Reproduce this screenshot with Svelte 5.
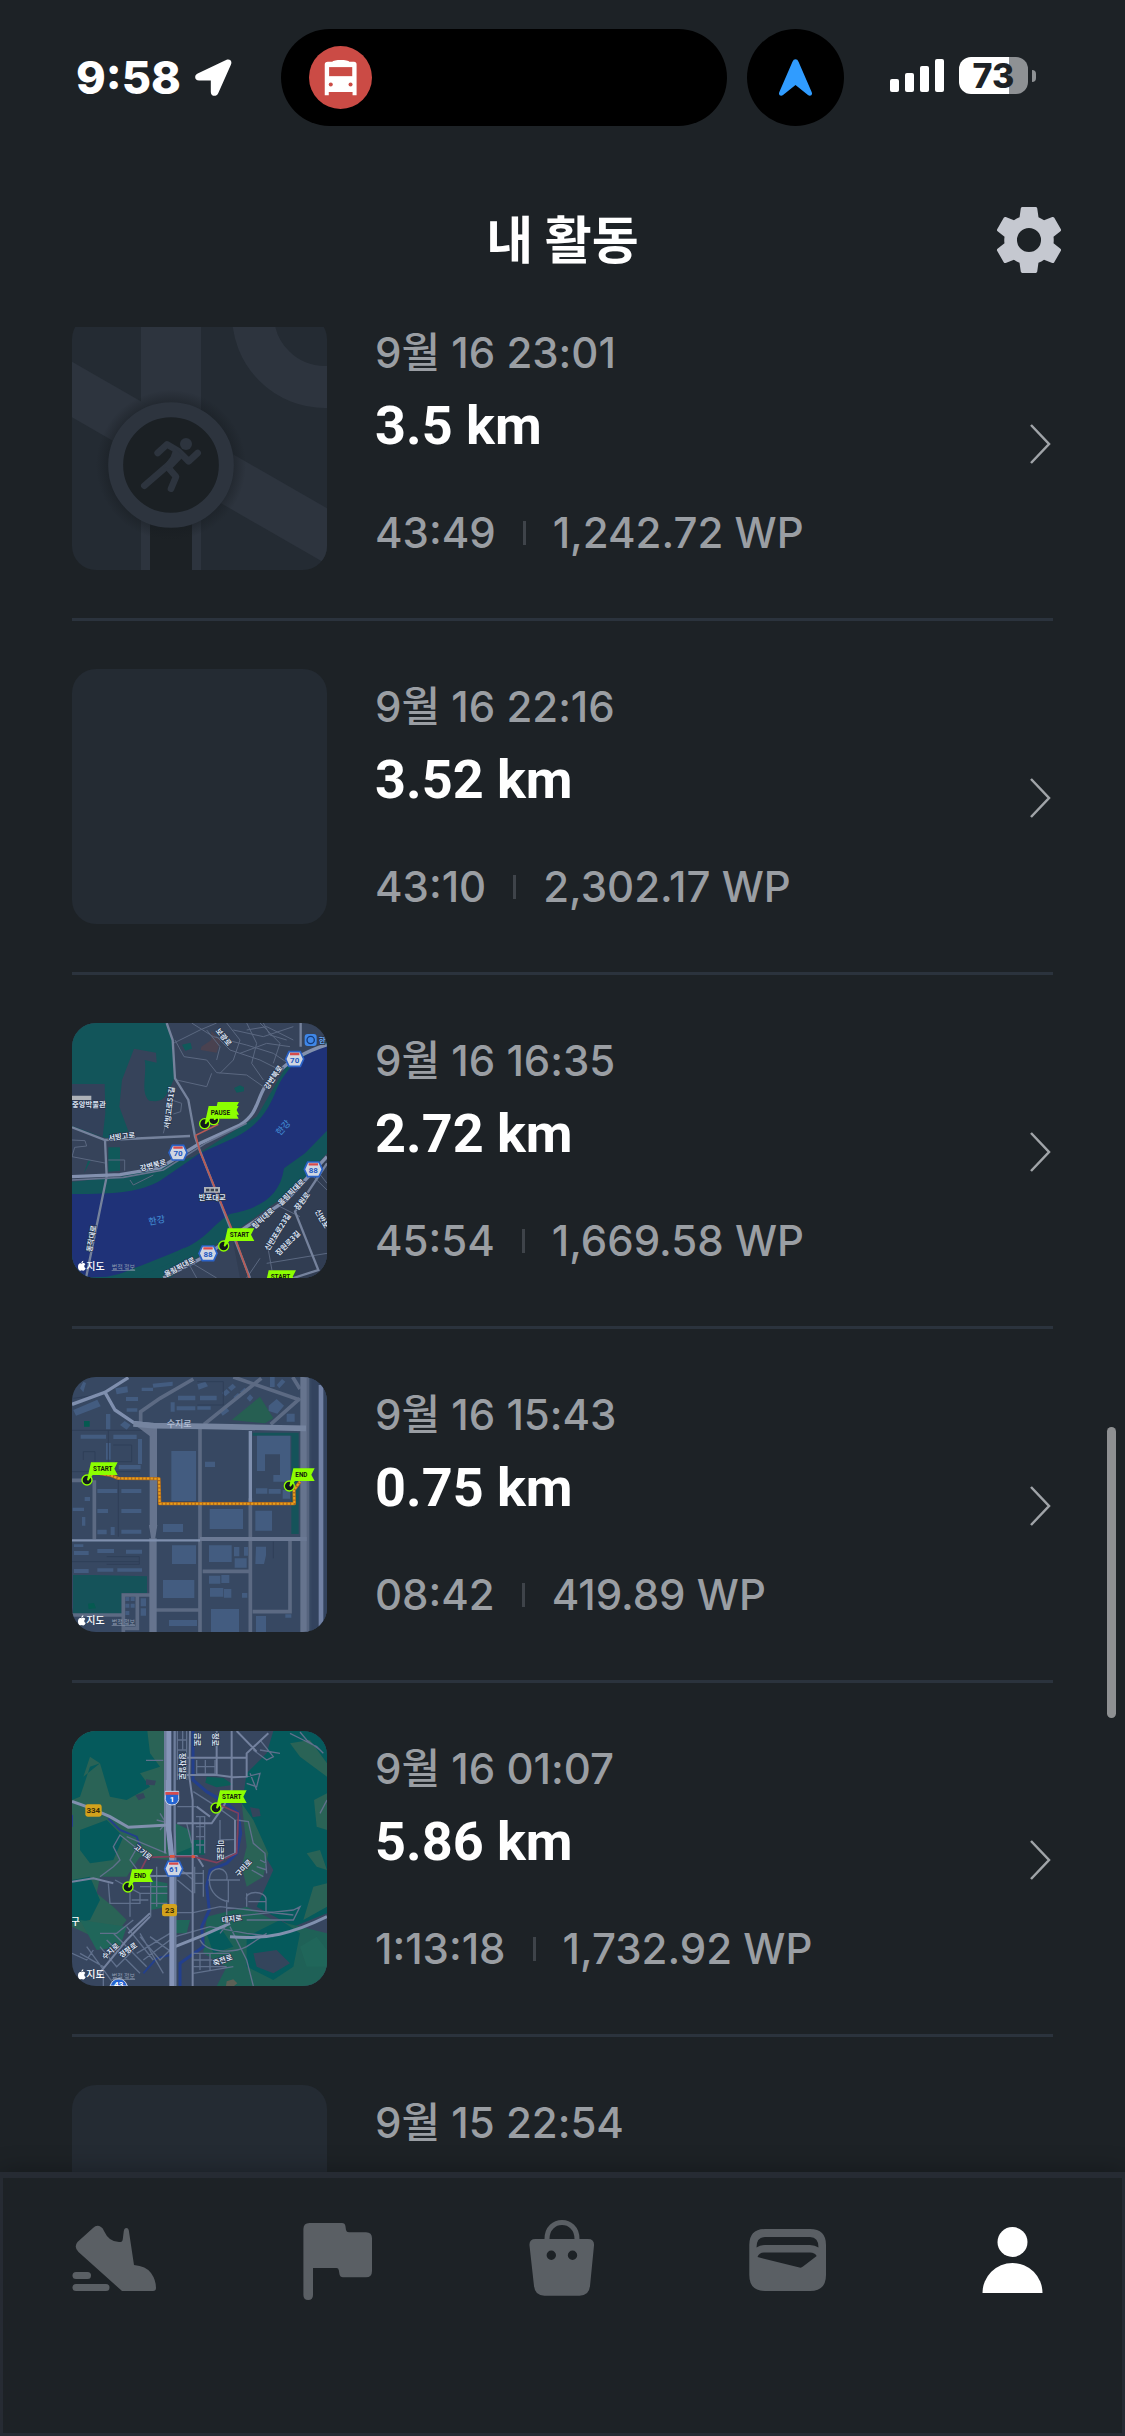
<script>
  import { onMount } from 'svelte';

  const activities = [
    { map: 'placeholder', date: '9월 16 23:01', distance: '3.5 km', time: '43:49', points: '1,242.72 WP' },
    { map: 'empty', date: '9월 16 22:16', distance: '3.52 km', time: '43:10', points: '2,302.17 WP' },
    { map: 'river', date: '9월 16 16:35', distance: '2.72 km', time: '45:54', points: '1,669.58 WP' },
    { map: 'blocks', date: '9월 16 15:43', distance: '0.75 km', time: '08:42', points: '419.89 WP' },
    { map: 'hills', date: '9월 16 01:07', distance: '5.86 km', time: '1:13:18', points: '1,732.92 WP' },
    { map: 'empty', date: '9월 15 22:54', distance: '', time: '', points: '' }
  ];

  const battery = 73;
  let list;

  // The list opens slightly scrolled, with the first thumbnail under the header.
  onMount(() => {
    list.scrollTop = 60;
  });
</script>

{#snippet flag(x, y, label, width)}
  <g transform="translate({x} {y})">
    <circle r="15" fill="#12181c" stroke="#8cff00" stroke-width="4" />
    <path d="M0 0L12 -53H{width}l-10 19 10 19H17L4 2z" fill="#8cff00" />
    <text x="18" y="-27" class="flag-text">{label}</text>
  </g>
{/snippet}

{#snippet shield(x, y, label)}
  <g transform="translate({x} {y})">
    <path d="M-27 0L-17 -22H17L27 0L17 22H-17z" fill="#d0d6e2" stroke="#2a62c8" stroke-width="5" />
    <path d="M-14 -15H14" stroke="#d84b4b" stroke-width="7" />
    <text y="11" class="shield-text">{label}</text>
  </g>
{/snippet}

{#snippet credit(y)}
  <g transform="translate(54 {y})">
    <path d="M10 6c4-3 10-2 12 2-5 3-4 10 1 12-2 7-7 9-12 6-5 3-11-1-11-10C0 7 5 3 10 6zM10 4c0-4 3-7 6-7 0 4-2 7-6 7z" fill="#fff" />
    <text x="25" y="24" class="credit">지도</text>
    <text x="101" y="23" class="legal">법적 정보</text>
  </g>
{/snippet}

<div class="screen">
  <div class="status">
    <div class="status-left">
      <span class="clock">9:58</span>
      <svg class="locate" viewBox="401 116 110 110" aria-hidden="true">
        <path d="M495 118c10-3 17 4 13 14l-38 86c-6 12-22 9-22-4v-34h-35c-14 0-15-16-4-21z" fill="#fff" />
      </svg>
    </div>
    <div class="islands">
      <div class="island wide">
        <svg class="bus" viewBox="746 78 188 188" aria-hidden="true">
          <circle cx="840" cy="172" r="94" fill="#cb4b45" />
          <path d="M802 125h14c2-7 48-7 50 0h14q8 0 8 8v92h-12v-10h-71v10h-12v-92q0-8 9-8z" fill="#fff" />
          <rect x="806" y="141" width="69" height="27" fill="#cb4b45" />
          <circle cx="811" cy="193" r="6" fill="#cb4b45" />
          <circle cx="870" cy="193" r="6" fill="#cb4b45" />
        </svg>
      </div>
      <div class="island round">
        <svg class="arrow" viewBox="146 112 98 110" aria-hidden="true">
          <path d="M195 113q6 0 9 7l39 90c4 9-4 14-11 9l-37-30-37 30c-7 5-15 0-11-9l39-90q3-7 9-7z" fill="#309cff" />
        </svg>
      </div>
    </div>
    <div class="status-right">
      <svg class="signal" viewBox="0 0 54 33" aria-hidden="true">
        <rect x="0" y="20" width="9" height="13" rx="2" />
        <rect x="15" y="14" width="9" height="19" rx="2" />
        <rect x="30" y="7" width="9" height="26" rx="2" />
        <rect x="45" y="0" width="9" height="33" rx="2" />
      </svg>
      <div class="battery">
        <div class="cell" style="--level: {battery}%">{battery}</div>
        <div class="nub"></div>
      </div>
    </div>
  </div>

  <header>
    <h1>내 활동</h1>
    <button class="settings" aria-label="설정">
      <svg viewBox="2.4 2.4 19.2 19.2" aria-hidden="true">
        <path fill="#c5c8d0" d="M19.14 12.94c.04-.3.06-.61.06-.94 0-.32-.02-.64-.07-.94l2.03-1.58c.18-.14.23-.41.12-.61l-1.92-3.32c-.12-.22-.37-.29-.59-.22l-2.39.96c-.5-.38-1.03-.7-1.62-.94l-.36-2.54c-.04-.24-.24-.41-.48-.41h-3.84c-.24 0-.43.17-.47.41l-.36 2.54c-.59.24-1.13.57-1.62.94l-2.39-.96c-.22-.08-.47 0-.59.22L2.74 8.87c-.12.21-.08.47.12.61l2.03 1.58c-.05.3-.09.63-.09.94s.02.64.07.94l-2.03 1.58c-.18.14-.23.41-.12.61l1.92 3.32c.12.22.37.29.59.22l2.39-.96c.5.38 1.03.7 1.62.94l.36 2.54c.05.24.24.41.48.41h3.84c.24 0 .44-.17.47-.41l.36-2.54c.59-.24 1.13-.56 1.62-.94l2.39.96c.22.08.47 0 .59-.22l1.92-3.32c.12-.22.07-.47-.12-.61l-2.01-1.58zM12 15.5a3.5 3.5 0 1 1 0-7 3.5 3.5 0 0 1 0 7z" />
      </svg>
    </button>
  </header>

  <main>
    <ul bind:this={list}>
      {#each activities as item}
        <li>
          <a href="#activity">
            <div class="thumb">
              {#if item.map === 'placeholder'}
                <svg viewBox="66 15 765 765" aria-hidden="true">
                  <defs>
                    <radialGradient id="halo">
                      <stop offset="0.82" stop-color="#171c21" stop-opacity="0.5" />
                      <stop offset="1" stop-color="#171c21" stop-opacity="0" />
                    </radialGradient>
                  </defs>
                  <g fill="#2d343e">
                    <path d="M273 15H453V780H273z" />
                    <path d="M66 155L831 595V763L66 322z" />
                  </g>
                  <circle cx="825" cy="15" r="216" fill="none" stroke="#2d343e" stroke-width="126" />
                  <path d="M300 620H426V780H300z" fill="#1c2125" />
                  <circle cx="363" cy="465" r="225" fill="url(#halo)" />
                  <circle cx="363" cy="465" r="166" fill="#1b2024" stroke="#2d343e" stroke-width="45" />
                  <circle cx="408" cy="402" r="18" fill="#2d343e" />
                  <g fill="none" stroke="#2d343e" stroke-width="20" stroke-linecap="round" stroke-linejoin="round">
                    <path d="M323 429L351 403L385 423L416 454L443 429" />
                    <path d="M283 527L355 465L383 435" />
                    <path d="M352 470L378 500L363 536" />
                  </g>
                  <path d="M372 412L400 440L364 478L340 470L362 440z" fill="#2d343e" />
                </svg>
              {:else if item.map === 'river'}
                <svg viewBox="36 39 765 765" aria-hidden="true">
                  <path d="M36 39H801V804H36z" fill="#36435a" />
                  <path d="M36 39H318L338 88L342 205C315 280 300 275 268 272C240 250 262 190 254 150L290 158L288 128L222 116L186 210L178 290L206 366L140 385L36 350z" fill="#12555a" />
                  <path d="M36 222H134L136 310L128 380L36 348z" fill="#33415a" />
                  <path d="M145 412L180 412V482L145 485zM72 490L92 452H84zM366 104l26-6 4 18-20 6zM522 234l18-8 12 6v12l-22 4z" fill="#10595a" />
                  <path d="M424 110l30-20 0-28 28 30-12 36-48-8z" fill="#4a4250" />
                  <path d="M36 515L180 500L270 480L400 440L590 320L690 150L801 95V430L700 540L560 640L430 730L330 804H36z" fill="#12555a" />
                  <path d="M36 552C180 552 240 545 300 512L420 430L520 385C590 350 620 310 645 250C680 160 740 130 801 104V362L735 430L672 475C660 560 600 595 510 612C460 640 440 690 360 720C280 760 200 790 140 800L36 804z" fill="#1f3278" />
                  <path d="M150 804C230 770 320 740 376 712L330 760L230 804zM670 660l20-14 4 26-30 10z" fill="#12555a" />
                  <path d="M540 804L520 700L700 560L801 450V804z" fill="#313d52" />
                  <g fill="none" stroke="#5b6880" stroke-width="3">
                    <path d="M340 100L420 60L470 39M345 90L372 140L440 150L470 188L560 195L610 230M395 39L460 80L560 105L640 130L700 170M500 39L540 90L520 150L480 190M560 39L590 100L575 160L610 210M600 39L660 100L640 160M520 60L610 80L700 50M470 80L510 120L600 150L650 175M540 130L620 100L690 110M350 210L440 230L455 190M310 370L335 270L365 280L362 305L340 312M36 390L75 392L80 408L44 412L36 440L140 460M145 450H194V482M210 510L220 525L280 495M610 39L630 75L680 90M440 60L480 110L470 150M560 60L620 50L700 90" />
                    <path d="M801 540L760 500M770 480L801 520M640 804L625 720M560 804L600 745M620 760L801 730M660 590L720 620M410 804L380 750L470 804" />
                  </g>
                  <g fill="none" stroke="#75829c" stroke-width="7">
                    <path d="M320 39L338 90L345 205L385 270L405 380L415 410L570 804" />
                    <path d="M36 352L135 390L390 378M135 390L140 500L78 804M722 39V110M801 460L705 605L775 780L700 804" />
                  </g>
                  <g fill="none" stroke="#8290ae" stroke-width="10">
                    <path d="M36 500L180 494L300 474L420 400L540 345C610 300 580 250 650 190C690 150 750 120 801 104" />
                    <path d="M310 804L430 742L560 650L680 570L801 440" />
                  </g>
                  <path d="M36 510L190 502L310 480L440 398L560 340" fill="none" stroke="#66738e" stroke-width="5" />
                  <path d="M475 343L407 376L420 425L520 668L568 804" fill="none" stroke="#b95a54" stroke-width="5" />
                  <g class="label">
                    <text x="146" y="392" transform="rotate(-7 146 392)">서빙고로</text>
                    <text x="242" y="484" transform="rotate(-15 242 484)">강변북로</text>
                    <text x="328" y="357" transform="rotate(-83 328 357)">서빙고로51길</text>
                    <text x="624" y="240" transform="rotate(-56 624 240)">강변북로</text>
                    <text x="466" y="62" transform="rotate(52 466 62)">보광로</text>
                    <text x="36" y="292">중앙박물관</text>
                    <text x="416" y="571">반포대교</text>
                    <text x="95" y="727" transform="rotate(-80 95 727)">동작대로</text>
                    <text x="584" y="658" transform="rotate(-42 584 658)">림픽대로</text>
                    <text x="664" y="588" transform="rotate(-45 664 588)">올림픽대로</text>
                    <text x="714" y="602" transform="rotate(-52 714 602)">잠원로</text>
                    <text x="764" y="604" transform="rotate(60 764 604)">신반포</text>
                    <text x="626" y="724" transform="rotate(-58 626 724)">신반포로23길</text>
                    <text x="656" y="738" transform="rotate(-45 656 738)">잠원로3길</text>
                    <text x="318" y="802" transform="rotate(-28 318 802)">올림픽대로</text>
                    <text x="776" y="100" class="station">한</text>
                  </g>
                  <text x="268" y="646" class="water" transform="rotate(-12 268 646)">한강</text>
                  <text x="660" y="378" class="water" transform="rotate(-48 660 378)">한강</text>
                  <path d="M36 257h58v13H36zM432 531h48v17h-48z" fill="#aeb2b8" />
                  <path d="M438 536h10v8h-10zM452 536h10v8h-10zM466 536h8v8h-8z" fill="#3a4250" />
                  <rect x="734" y="72" width="36" height="36" rx="9" fill="#3f87e8" />
                  <circle cx="752" cy="90" r="11" fill="none" stroke="#143a78" stroke-width="4" />
                  {@render shield(704, 147, '70')}
                  {@render shield(354, 428, '70')}
                  {@render shield(760, 478, '88')}
                  {@render shield(444, 730, '88')}
                  {@render flag(461, 329, '', 76)}
                  {@render flag(434, 341, 'PAUSE', 102)}
                  {@render flag(491, 708, 'START', 92)}
                  {@render flag(614, 834, 'START', 94)}
                  {@render credit(755)}
                </svg>
              {:else if item.map === 'blocks'}
                <svg viewBox="36 36 765 765" aria-hidden="true">
                  <path d="M36 36H801V801H36z" fill="#374862" />
                  <path d="M755 36H801V801H755z" fill="#33435e" />
                  <path d="M515 165L600 95L640 160L615 175z" fill="#265f52" />
                  <path d="M578 203H716V507H694V212H578zM39 630L100 630L261 634V684H185V747H39z" fill="#15535a" />
                  <path d="M72 168h17v17H72zM84 716l18-2 6 16-22 2z" fill="#055a50" />
                  <g fill="#435c80">
                    <path d="M40 135L112 104L122 124L48 152zM166 70l36-6 2 18-34 6zM245 68h34v10h-34zM278 56l60-6v12l-58 6zM198 96h36v12h-36zM354 92h52v14h-52zM350 124h56v12h-56zM332 112h12v28h-12zM412 58l24-8 8 14-28 10zM420 92h50v14h-50zM412 124h40v10h-40zM630 36h14v30h-14zM650 60l16-18 10 8-18 20zM626 122l24-20 22 20-20 24-26-8zM680 146h24v24h-24zM200 130h32v10h-32z" />
                    <path d="M62 209h76v12H62zM160 209h70v13h-70zM138 147h13v46h-13zM138 234h14v50h-14zM234 222h12v75h-12zM180 180l14-12 18 12-12 14zM60 70l10-20 8 4-8 28zM176 300h66v13h-66zM435 290h30v16h-30z" />
                    <path d="M334 258H408V408H334zM591 212H691V350H640V330H660V268H615V318H591zM588 370h34v16h-34zM626 372h36v14h-36zM668 375h22v26h-22zM449 432h100v60H449zM586 437h50v60h-50zM309 477h60v24h-60z" />
                    <path d="M112 372h60v12h-60zM184 372h60v12h-60zM112 432h32v12h-32zM184 432h60v12h-60zM112 494h28v14h-28zM184 494h60v12h-60zM152 486h12v24h-12zM38 428h34v10H38zM74 396h16v12H74zM66 456h10v26H66zM42 538h28v8H42zM42 558h44v12H42zM112 552h50v12h-50zM198 554h48v12h-48zM112 610h48v10h-48zM172 610h74v10h-74zM42 612h44v12H42z" />
                    <path d="M336 541h72v56h-72zM447 541h68v50h-68zM522 546h16v28h-16zM552 546h12v26h-12zM524 580h36v28h-36zM588 545h30v26l-6 26h-26zM309 645h94v54h-94zM447 632h34v24h-34zM484 630h24v24h-24zM450 669h40v26h-40zM492 672h22v26h-22zM546 684h16v14h-16zM327 765h84v18h-84zM453 732h84v69h-84zM588 753h30v48h-30zM196 696h12v12h-12zM212 696h12v12h-12zM196 716h12v12h-12zM212 716h12v12h-12zM242 700h16v24h-16zM242 730h16v22h-16zM196 738h12v12h-12zM676 748h18v10h-18z" />
                    <path d="M486 84l14-12 10 10-14 12zM504 68l14-12 10 10-14 12zM520 96l14-12 10 10-14 12zM540 80l14-12 10 10-14 12zM480 140l20-12 8 10-20 14zM560 100l10-12 10 10-10 12z" />
                  </g>
                  <g fill="none" stroke="#2f3f58" stroke-width="3">
                    <path d="M36 196H260M145 196V310M160 240H215V290H165M70 285V260H105V290M175 345V515M36 590H240M140 575H238V598H140M412 50H490V120H412M40 100L110 90M640 530V580M36 320H240" />
                  </g>
                  <g fill="none" stroke="#5c6a83" stroke-width="11">
                    <path d="M36 346H98M103 346V522M420 185V801M571 400V801M428 619H571M286 735H420M578 740H690V528M190 801V690H275M232 690V790H190M520 36L720 105M400 42L300 100L242 140V178M604 40L432 178M720 100L632 178M698 36L720 72M36 750H185" />
                  </g>
                  <path d="M280 180V490M279 520V801M732 36V801" fill="none" stroke="#66748e" stroke-width="22" />
                  <path d="M744 36V801" fill="none" stroke="#56647e" stroke-width="8" />
                  <path d="M267 480H292L285 525H274zM205 165L272 215L280 190z" fill="#66748e" />
                  <g fill="none" stroke="#7f8fae" stroke-width="10">
                    <path d="M36 118L135 82L205 38M135 82L165 135L220 172L280 180M571 198V410" />
                    <path d="M36 526H420" stroke-width="7" />
                    <path d="M420 522H740" stroke="#6b7994" stroke-width="12" />
                    <path d="M220 177L280 182L440 184L738 190" stroke-width="17" stroke="#75849f" />
                    <path d="M783 60V801" stroke-width="14" stroke="#7181a4" />
                  </g>
                  <text x="320" y="187" class="road">수지로</text>
                  <g fill="none" stroke-linejoin="round">
                    <path d="M120 326L150 330L175 340L297 341L299 416L703 416L702 375L720 350" stroke="#b06a1c" stroke-width="10" />
                    <path d="M120 326L150 330L175 340L297 341L299 416L703 416L702 375L720 350" stroke="#e9a01c" stroke-width="6" stroke-dasharray="7 4" />
                  </g>
                  {@render flag(81, 345, 'START', 92)}
                  {@render flag(688, 363, 'END', 76)}
                  {@render credit(754)}
                </svg>
              {:else if item.map === 'hills'}
                <svg viewBox="36 33 765 765" aria-hidden="true">
                  <path d="M36 33H801V798H36z" fill="#37465f" />
                  <path d="M36 33H312V300L330 420L240 410L200 470L120 470L110 520L160 560L200 600L170 640L100 650L36 620z" fill="#2a6356" />
                  <path d="M36 33H262L270 100L300 140L240 160L270 200L200 240L150 230L120 130L90 140L60 230L36 240zM60 330L140 300L190 350L160 420L90 430L60 390zM120 130L90 110L70 170zM36 480L90 470L120 540L90 600L36 610z" fill="#055a5c" />
                  <path d="M640 33H801V580L700 620L590 560L640 450L600 380L560 300L545 260L560 160L620 100z" fill="#055a5c" />
                  <path d="M545 250L580 300L625 400L610 470L560 500L545 440L560 380zM762 240L801 220V330L770 320zM740 400L780 390L801 450L770 440zM690 70L750 60L801 130V170L720 110zM760 500L801 490V560L730 600z" fill="#2a6356" />
                  <path d="M440 590L560 560L640 600L801 640V798H470L500 740L430 700z" fill="#1f6157" />
                  <path d="M560 650L660 600L720 640L700 740L640 780L560 740zM440 640L480 620L520 680L460 700z" fill="#055a5c" />
                  <path d="M720 680L770 650L801 690V740L740 740zM345 310L390 330L400 400L345 400zM345 600L390 600L380 640L345 640zM272 480L322 490V560L272 570zM60 600L200 620L180 680L110 690z" fill="#20665a" />
                  <path d="M400 360h34v44h-34zM350 400L398 380V412H350zM440 170l50 4 30 20-50 8-34-14z" fill="#0b5d58" />
                  <path d="M580 700L650 690L690 730L640 760L590 740zM258 178l30 4-4 14-26-2zM226 225l24-6 6 14-20 8zM570 262l28 4 4 22-24 4z" fill="#34455c" />
                  <path d="M500 784l20-6 12 12-10 8h-24z" fill="#5b6055" />
                  <g fill="none" stroke="#233f8c" stroke-width="9">
                    <path d="M399 33V180L440 215L500 250L535 280L542 340L530 400L500 430L450 450L440 500L448 570L425 620L430 680L360 730V798" />
                    <path d="M145 295L180 330L230 350L245 390L260 400M36 285V320M250 760L290 715L330 705" stroke-width="6" />
                  </g>
                  <g fill="none" stroke="#60708c" stroke-width="4">
                    <path d="M352 33V180M368 33V90M380 33V180M352 90H380M352 60H380M410 120V162H465V120M436 120V162M410 140H465M352 260H410M352 310H380L395 370M408 290H434V400M408 320H434M408 350H434M420 290V400M408 375H434M480 300V360L525 358V300L470 260L400 215M530 300L565 305L580 370L615 400L620 460M500 480C510 440 450 430 448 480C448 520 480 540 505 545V480M445 480H540M500 600V540M352 440L400 480M352 480L400 520M345 578H400L480 560L700 585M560 540C550 510 620 510 618 540V580M565 545H618M560 560V520M600 420L620 430M590 440L620 450M575 450L610 470M272 470V590M290 440V560M240 500H322M240 520H322M272 550H322M210 500V590M165 480L240 520V550H150L145 490M120 470L160 440L180 420L160 380L180 345L230 385L210 420L240 460M200 350L320 400M215 540H265M120 640L170 640L220 600M36 700L80 720L100 690M120 680L170 740L220 690M140 660L240 760M160 640L260 740M200 620L280 720M240 650L300 720L330 690M230 700L330 640M250 720L330 660M240 640L310 760M270 650L340 700M345 650L450 620L560 640L640 650M400 700H510M400 720H480M400 740H500M420 700V750M450 700V750M400 760L520 740M420 660C440 700 520 700 560 680L620 640M510 620L560 720L580 798M480 640L520 590L700 570L720 560L700 600L560 600M60 700L130 740V798M80 680L160 790M258 121H310M300 280L325 320M290 300L330 310M300 330L325 300M404 440V520M430 450V530M404 460H430M404 490H430M690 40L730 60L770 80L790 100M720 36L740 60L780 90M780 280L801 240M560 170L600 160L590 200L560 190M570 160L590 210M600 60L640 110L620 120L580 90M600 90L660 100" />
                  </g>
                  <g fill="none" stroke="#73819e" stroke-width="6">
                    <path d="M390 33L388 170L398 240V798M352 113H562M352 165H470L520 172L560 170V100L625 40M515 33V210L490 260L455 310H352M315 33V400M410 260L450 290M530 33L590 95M470 33V165M36 485L100 475L160 490M345 408H410L430 440M345 460H398M205 640L270 580M250 468H340M110 770L200 660L270 590M525 300V400L480 420" />
                  </g>
                  <path d="M36 244L80 260L150 290L205 322L325 315M345 680L420 650L510 610M510 650C620 660 700 640 801 590" fill="none" stroke="#8190ae" stroke-width="9" />
                  <path d="M326 33V330L336 420V798" fill="none" stroke="#8695b8" stroke-width="16" />
                  <path d="M344 33V330L346 420V798M316 33V180" fill="none" stroke="#6d7d9c" stroke-width="7" />
                  <path d="M235 465L262 412L330 410L400 410L470 428L530 400L535 280L480 255" fill="none" stroke="#80405c" stroke-width="5" />
                  <path d="M330 409h14M395 410h10" stroke="#e0523c" stroke-width="8" />
                  <g class="label">
                    <text x="359" y="98" transform="rotate(90 359 98)">정자일로</text>
                    <text x="404" y="38" transform="rotate(90 404 38)">금로</text>
                    <text x="460" y="38" transform="rotate(90 460 38)">정로</text>
                    <text x="475" y="360" transform="rotate(90 475 360)">미금로</text>
                    <text x="220" y="384" transform="rotate(38 220 384)">고기로</text>
                    <text x="536" y="472" transform="rotate(-48 536 472)">구미로</text>
                    <text x="134" y="720" transform="rotate(-42 134 720)">수지로</text>
                    <text x="184" y="714" transform="rotate(-35 184 714)">정평로</text>
                    <text x="486" y="608" transform="rotate(-7 486 608)">대지로</text>
                    <text x="462" y="738" transform="rotate(-20 462 738)">죽전로</text>
                  </g>
                  <text x="32" y="614" class="credit">구</text>
                  <rect x="76" y="253" width="49" height="37" rx="7" fill="#d3a21c" />
                  <text x="100" y="279" class="route">334</text>
                  <rect x="306" y="552" width="45" height="37" rx="7" fill="#d3a21c" />
                  <text x="329" y="578" class="route">23</text>
                  <path d="M316 214h40v12q4 28-20 29q-24-1-20-29z" fill="#2464d2" stroke="#d0d8e8" stroke-width="3" />
                  <path d="M316 216h40v8h-40z" fill="#d84b4b" />
                  <text x="336" y="247" class="shield-text light">1</text>
                  {@render shield(341, 446, '61')}
                  <path d="M150 798q8-22 26-22t26 22z" fill="#2464d2" stroke="#d0d8e8" stroke-width="3" />
                  <text x="176" y="802" class="shield-text light">43</text>
                  {@render flag(468, 264, 'START', 92)}
                  {@render flag(204, 501, 'END', 75)}
                  {@render credit(751)}
                </svg>
              {/if}
            </div>
            <div class="info">
              <p class="date">{item.date}</p>
              <p class="distance">{item.distance}</p>
              <p class="stats">
                {#if item.time}
                  <span>{item.time}</span><i></i><span>{item.points}</span>
                {/if}
              </p>
            </div>
            <svg class="chevron" viewBox="0 0 24 42" aria-hidden="true">
              <path d="M2 3L20 22L2 41" fill="none" stroke="#a0a4a8" stroke-width="2.5" />
            </svg>
          </a>
        </li>
      {/each}
    </ul>
    <div class="scrollbar"></div>
  </main>

  <nav>
    <a href="#run" aria-label="러닝">
      <svg viewBox="0 0 90 90" aria-hidden="true">
        <path d="M25 14q4-4 8-1q2 1 3 4q5 11 15 11h1.500q2 0 2.300-3l1-8q.5-3 2.600-3t2.500 3L66 51q12 1 17 8q5 7 5 15q0 3-3 3H54L10.500 38q-5-5-1-10z" />
        <rect x="4.500" y="58" width="18.500" height="7" rx="3.500" />
        <rect x="4.500" y="70" width="37" height="7" rx="3.500" />
      </svg>
    </a>
    <a href="#challenge" aria-label="챌린지">
      <svg viewBox="0 0 90 90" aria-hidden="true">
        <path d="M16.500 9H49q3 0 3.400 3l.6 4q.4 2.300 3 2.300H73q6 0 6 6V57q0 6.300-6 6.300H50q-3 0-3.500-3l-.7-4q-.3-2.300-2.300-2.300H20V81q0 5-4.800 5t-4.800-5V15q0-6 6-6z" />
      </svg>
    </a>
    <a href="#shop" aria-label="상점">
      <svg viewBox="0 0 90 90" aria-hidden="true">
        <path d="M29 27V25C29 3 59 3 59 25V27" fill="none" stroke="#5a5f64" stroke-width="5" />
        <path fill-rule="evenodd" d="M17.500 25H70q6.500 0 6 6.500L72 72q-1 9.700-10.500 9.700h-35Q17 81.700 16 72L11.500 31.500Q11 25 17.500 25zM33.300 36.600a4.700 4.700 0 1 0 0 9.400 4.700 4.700 0 1 0 0-9.400zM54.500 36.600a4.700 4.700 0 1 0 0 9.400 4.700 4.700 0 1 0 0-9.400z" />
      </svg>
    </a>
    <a href="#wallet" aria-label="지갑">
      <svg viewBox="0 0 90 90" aria-hidden="true">
        <path fill-rule="evenodd" d="M22 15H67Q83 15 83 31V61Q83 77 67 77H22Q6.300 77 6.300 61V31Q6.300 15 22 15zM22 23q-8.500 0-8.500 10.500Q17 31 22 31H67q5 0 8.500 2.500Q75.500 23 67 23zM21 38.500q-5 0-6.500 4.500L56.500 53.500q2 .5 3.500-1L73.700 42q-1.700-3.500-6.700-3.500z" />
      </svg>
    </a>
    <a href="#me" class="active" aria-label="내 활동" aria-current="page">
      <svg viewBox="0 0 90 90" aria-hidden="true">
        <circle cx="44.500" cy="28" r="15" />
        <path d="M14.500 79a30 30 0 0 1 60 0z" />
      </svg>
    </a>
  </nav>
</div>

<style>
  :global(body) {
    margin: 0;
    background: #1d2226;
  }

  .screen {
    display: flex;
    flex-direction: column;
    height: 100vh;
    color: #fff;
    background: #1d2226;
    font-family: Inter, 'Noto Sans CJK KR', sans-serif;
  }

  svg {
    display: block;
  }

  .status {
    display: grid;
    grid-template-columns: 1fr auto 1fr;
    align-items: center;
    padding-top: 29px;
  }

  .status-left {
    display: flex;
    align-items: center;
    gap: 14px;
    padding-left: 76px;
  }

  .clock {
    font-size: 45px;
    font-weight: 800;
    line-height: 54px;
  }

  .locate {
    width: 37px;
    height: 37px;
  }

  .islands {
    display: flex;
    gap: 20px;
  }

  .island {
    display: flex;
    align-items: center;
    height: 97px;
    border-radius: 49px;
    background: #000;
  }

  .wide {
    width: 418px;
    padding-left: 28px;
  }

  .round {
    justify-content: center;
    width: 97px;
  }

  .bus {
    width: 63px;
    height: 63px;
  }

  .arrow {
    width: 33px;
    height: 37px;
  }

  .status-right {
    display: flex;
    align-items: center;
    justify-content: flex-end;
    gap: 15px;
    padding: 0 89px 4px 0;
  }

  .signal {
    width: 54px;
    height: 33px;
    fill: #fff;
  }

  .battery {
    display: flex;
    align-items: center;
    gap: 4px;
  }

  .cell {
    width: 69px;
    border-radius: 12px;
    background: linear-gradient(90deg, #fff var(--level), #8e9194 var(--level));
    color: #1d2226;
    font-size: 34px;
    font-weight: 800;
    line-height: 37px;
    text-align: center;
  }

  .nub {
    width: 4px;
    height: 12px;
    border-radius: 0 6px 6px 0;
    background: #8e9194;
  }

  header {
    display: grid;
    grid-template-columns: 1fr auto 1fr;
    align-items: start;
    padding: 81px 63px 54px;
  }

  h1 {
    grid-column: 2;
    margin: 0;
    font-family: 'Noto Sans CJK KR', sans-serif;
    font-size: 51px;
    font-weight: 700;
    line-height: 60px;
  }

  .settings {
    justify-self: end;
    width: 66px;
    height: 66px;
    padding: 0;
    border: 0;
    background: none;
  }

  main {
    position: relative;
    flex: 1;
    min-height: 0;
  }

  ul {
    height: 100%;
    margin: 0;
    padding: 0 72px;
    overflow-y: auto;
    scrollbar-width: none;
    list-style: none;
    box-sizing: border-box;
  }

  li {
    padding: 48px 0;
  }

  li + li {
    border-top: 3px solid #2b333d;
  }

  li a {
    display: flex;
    align-items: center;
    color: inherit;
    text-decoration: none;
  }

  .thumb {
    width: 255px;
    height: 255px;
    margin-right: 48px;
    overflow: hidden;
    border-radius: 24px;
    background: #242b33;
  }

  .info {
    flex: 1;
  }

  p {
    margin: 0;
  }

  .date,
  .stats {
    min-height: 54px;
    color: #9a9ea3;
    font-size: 42px;
    font-weight: 500;
    line-height: 54px;
  }

  .distance {
    min-height: 68px;
    margin: 12px 0 46px;
    font-family: Roboto, sans-serif;
    font-size: 54px;
    font-weight: 700;
    line-height: 68px;
  }

  .stats {
    display: flex;
    align-items: center;
    gap: 27px;
  }

  .stats i {
    width: 3px;
    height: 24px;
    background: #3f444a;
  }

  .chevron {
    width: 24px;
    height: 42px;
  }

  .scrollbar {
    position: absolute;
    top: 1100px;
    right: 9px;
    width: 9px;
    height: 291px;
    border-radius: 5px;
    background: #8e9092;
  }

  nav {
    position: relative;
    display: grid;
    grid-template-columns: repeat(5, 1fr);
    justify-items: center;
    padding: 39px 0 132px;
    border-top: 3px solid #262b33;
    background: #1d2226;
    box-shadow:
      inset 0 0 0 3px #262b33,
      0 0 24px rgba(0, 0, 0, 0.3);
  }

  nav svg {
    width: 90px;
    height: 90px;
    fill: #5a5f64;
  }

  nav .active svg {
    fill: #fff;
  }

  .flag-text {
    fill: #14200c;
    font: 700 19px Roboto, sans-serif;
  }

  .shield-text {
    fill: #1d56c0;
    font: 700 24px Roboto, sans-serif;
    text-anchor: middle;
  }

  .light {
    fill: #fff;
  }

  .route {
    fill: #3a2c08;
    font: 700 24px Roboto, sans-serif;
    text-anchor: middle;
  }

  .label {
    fill: #dbe3f1;
    font: 700 22px 'Noto Sans CJK KR', sans-serif;
    paint-order: stroke;
    stroke: #27324a;
    stroke-width: 4px;
  }

  .station {
    fill: #6aa8f0;
  }

  .road {
    fill: #b4c0d6;
    font: 500 27px 'Noto Sans CJK KR', sans-serif;
  }

  .water {
    fill: #3f86cc;
    font: 500 27px 'Noto Sans CJK KR', sans-serif;
  }

  .credit {
    fill: #fff;
    font: 500 30px 'Noto Sans CJK KR', sans-serif;
  }

  .legal {
    fill: #8d9ab0;
    font: 400 18px 'Noto Sans CJK KR', sans-serif;
    text-decoration: underline;
  }
</style>
